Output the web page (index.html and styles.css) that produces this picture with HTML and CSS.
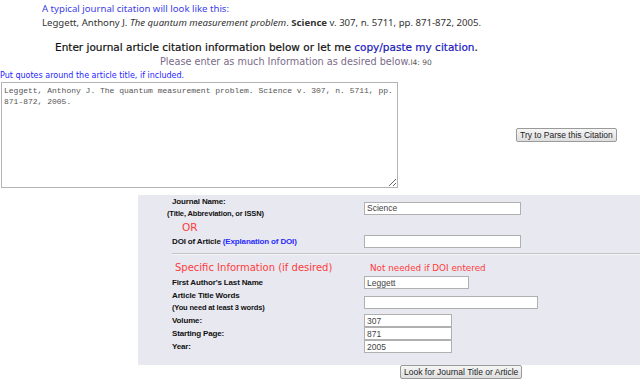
FILE: index.html
```html
<!DOCTYPE html>
<html lang="en">
<head>
  <meta charset="UTF-8">
  <title>Citation Linker</title>
  <link rel="stylesheet" href="styles.css">
</head>
<body>

<div class="sample">
  <div class="sample-title">A typical journal citation will look like this:</div>
  <div class="sample-cite">Leggett, Anthony J. <i>The quantum measurement problem</i>. <b>Science</b> v. 307, n. 5711, pp. 871-872, 2005.</div>
</div>

<h2 class="intro">Enter journal article citation information below or let me <a href="#">copy/paste my citation</a>.</h2>
<div class="please">Please enter as much Information as desired below.<span class="count">l4: 90</span></div>
<div class="quotes">Put quotes around the article title, if included.</div>

<div class="paste-row">
  <textarea class="paste">Leggett, Anthony J. The quantum measurement problem. Science v. 307, n. 5711, pp. 871-872, 2005.</textarea>
  <button class="btn parse-btn">Try to Parse this Citation</button>
</div>

<div class="panel">
  <div class="field">
    <label>Journal Name:<small class="shift">(Title, Abbreviation, or ISSN)</small></label>
    <input type="text" class="w-lg" value="Science">
  </div>
  <div class="or">OR</div>
  <div class="field">
    <label>DOI of Article <a href="#">(Explanation of DOI)</a></label>
    <input type="text" class="w-lg">
  </div>
  <hr>
  <div class="field heading">
    <span class="specific">Specific Information (if desired)</span>
    <span class="note">Not needed if DOI entered</span>
  </div>
  <div class="field">
    <label>First Author's Last Name</label>
    <input type="text" class="w-md" value="Leggett">
  </div>
  <div class="field gap">
    <label>Article Title Words<small>(You need at least 3 words)</small></label>
    <input type="text" class="w-xl">
  </div>
  <div class="field">
    <label>Volume:</label>
    <input type="text" class="w-sm" value="307">
  </div>
  <div class="field">
    <label>Starting Page:</label>
    <input type="text" class="w-sm" value="871">
  </div>
  <div class="field">
    <label>Year:</label>
    <input type="text" class="w-sm" value="2005">
  </div>
</div>

<div class="search-row">
  <button class="btn">Look for Journal Title or Article</button>
</div>

</body>
</html>
```

FILE: styles.css
```css
body {
  margin: 0;
  background: #fff;
  font-family: "DejaVu Sans", Verdana, sans-serif;
  color: #222;
}

a {
  color: #2020ff;
  text-decoration: none;
}

.sample {
  padding: 2px 0 0 42px;
  font-family: "Noto Sans", sans-serif;
  font-size: 9.6px;
  line-height: 14px;
}

.sample-title {
  color: #4040e8;
}

.sample-cite {
  color: #333;
}

.intro {
  margin: 9px 0 0 55px;
  font-size: 10.5px;
  font-weight: normal;
  line-height: 16px;
  color: #111;
  -webkit-text-stroke: 0.2px #111;
}

.please {
  margin-left: 160px;
  font-size: 9.7px;
  line-height: 14px;
  color: #7a6a88;
}

.count {
  font-size: 7.5px;
  color: #555;
}

.quotes {
  font-size: 8px;
  line-height: 12px;
  color: #2626ff;
}

.paste-row {
  display: flex;
  align-items: flex-start;
}

.paste {
  width: 397px;
  height: 106px;
  margin: 0 0 0 1px;
  padding: 2px 2px;
  box-sizing: border-box;
  border: 1px solid #b4b4b4;
  font-family: "Liberation Mono", "Courier New", monospace;
  font-size: 8px;
  line-height: 11px;
  color: #555;
  resize: both;
}

.btn {
  font-family: "Liberation Sans", Arial, sans-serif;
  font-size: 8.5px;
  color: #222;
  background: linear-gradient(#f6f6f6, #dedede);
  border: 1px solid #9a9a9a;
  border-radius: 2px;
  height: 14px;
  padding: 0 3px;
  line-height: 12px;
}

.parse-btn {
  margin: 46px 0 0 118px;
}

.panel {
  margin: 7px 0 0 138px;
  height: 170px;
  box-sizing: border-box;
  background: #e8e8f0;
  padding: 1px 0 0 34px;
  font-family: "Liberation Sans", Arial, sans-serif;
}

.field {
  display: grid;
  grid-template-columns: 192px auto;
  align-items: center;
}

.field label {
  font-size: 8px;
  letter-spacing: -0.15px;
  font-weight: bold;
  line-height: 12px;
  color: #111;
}

.field label small {
  display: block;
  font-size: 7.5px;
  line-height: 12px;
}

.field label .shift {
  margin-left: -5px;
}

.field label a {
  color: #2a2aff;
}

.field input {
  height: 13px;
  box-sizing: border-box;
  border: 1px solid #b0b0b0;
  background: #fff;
  font-family: "Liberation Sans", Arial, sans-serif;
  font-size: 8.5px;
  color: #444;
  padding: 0 2px;
  margin: 0;
}

.w-lg { width: 157px; }
.w-md { width: 105px; }
.w-xl { width: 174px; }
.w-sm { width: 88px; }

.gap {
  margin-top: 1px;
}

.or {
  margin: 0 0 0 10px;
  font-size: 10.5px;
  line-height: 15px;
  color: #ff3b3b;
  font-family: "DejaVu Sans", Verdana, sans-serif;
}

.panel hr {
  margin: 5px 0 5px;
  border: 0;
  border-top: 1px solid #c4c4c4;
  border-bottom: 1px solid #f4f4f8;
}

.heading {
  font-family: "DejaVu Sans", Verdana, sans-serif;
  color: #ff3b3b;
  line-height: 16px;
}

.specific {
  padding-left: 3px;
  font-size: 10px;
}

.note {
  padding-left: 6px;
  font-size: 8.8px;
}

.search-row {
  display: flex;
  padding: 0 0 0 400px;
}
```
